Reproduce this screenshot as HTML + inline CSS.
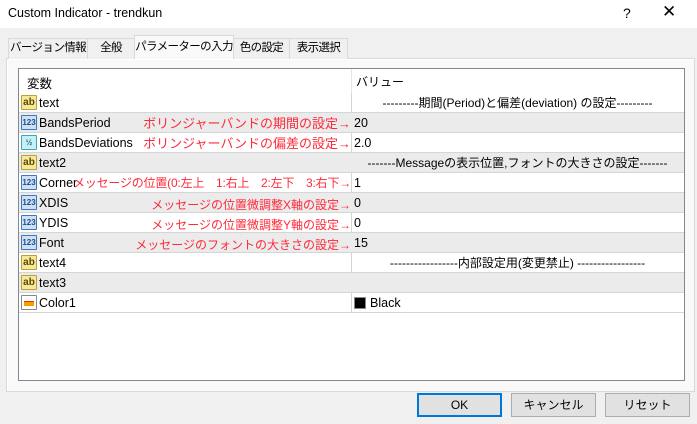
<!DOCTYPE html>
<html><head><meta charset="utf-8"><style>
*{margin:0;padding:0;box-sizing:border-box}
body{width:697px;height:424px;background:#f0f0f0;font-family:"Liberation Sans","Noto Sans CJK JP",sans-serif;font-size:12px;color:#000;position:relative;overflow:hidden}
.abs{position:absolute;white-space:nowrap}
.title{left:0;top:0;width:697px;height:28px;background:#fff}
.tab{position:absolute;top:38px;height:21px;border:1px solid #d9d9d9;border-bottom:none;background:#f0f0f0;font-size:11.5px;line-height:19px;text-align:center;white-space:nowrap;overflow:hidden;letter-spacing:-0.6px}
.panel{left:6px;top:58px;width:689px;height:334px;border:1px solid #d9d9d9;background:#f9f9f9;box-shadow:inset 1px 1px 0 #fff}
.list{left:18px;top:68px;width:667px;height:313px;border:1px solid #828790;background:#fff;overflow:hidden}
.row{position:absolute;left:0;width:665px;height:20px;border-bottom:1px solid #d5d5d5;font-size:12.5px;line-height:21px;white-space:nowrap}
.row.g{background:#ebebeb}
.row .n{position:absolute;left:20px;top:0}
.row .v{position:absolute;left:335px;top:0}
.row .c{position:absolute;left:332px;width:333px;text-align:center;top:0}
.vd{position:absolute;left:332px;top:0;width:1px;height:220px;background:#d5d5d5}
.ic{position:absolute;left:2px;top:2px;width:16px;height:15px;border:1px solid;border-radius:1px;font-size:8px;line-height:13px;text-align:center;font-weight:bold}
.ab{background:#f6e79a;border-color:#b9a23c;color:#5a4a00;font-size:10px}
.num{background:#cfe0f3;border-color:#3a79c2;color:#1b4f8f}
.fr{background:#c9eef3;border-color:#3aa8bf;color:#1b6f85}
.red{color:#ff2a3a;position:absolute;right:333px;top:0;font-size:13px}
.btn{position:absolute;top:393px;width:85px;height:24px;border:1px solid #adadad;background:#e1e1e1;text-align:center;line-height:22px;font-size:12px}
</style></head><body>
<div class="abs title"></div>
<div class="abs" style="left:8px;top:6px;font-size:12.5px">Custom Indicator - trendkun</div>
<div class="abs" style="left:623px;top:5px;font-size:14px">?</div>
<div class="abs" style="left:662px;top:2px;font-size:17px">✕</div>
<div class="abs panel"></div>
<div class="tab" style="left:8px;width:80px">バージョン情報</div>
<div class="tab" style="left:87px;width:48px">全般</div>
<div class="tab" style="left:134px;width:100px;top:35px;height:24px;background:#f9f9f9;line-height:22px;z-index:2">パラメーターの入力</div>
<div class="tab" style="left:233px;width:57px">色の設定</div>
<div class="tab" style="left:289px;width:59px">表示選択</div>
<div class="abs list">
 <div class="abs" style="left:8px;top:4px;font-size:12.5px">変数</div>
 <div class="abs" style="left:332px;top:0;width:1px;height:24px;background:#e5e5e5"></div>
 <div class="abs" style="left:337px;top:4px;font-size:12px">バリュー</div>
 <div style="position:absolute;top:24px;left:0;width:665px">
  <div class="vd"></div>
  <div class="row" style="top:0"><span class="ic ab">ab</span><span class="n">text</span><span class="c" style="font-size:12px">---------期間(Period)と偏差(deviation) の設定---------</span></div>
  <div class="row g" style="top:20px"><span class="ic num">123</span><span class="n">BandsPeriod</span><span class="red">ボリンジャーバンドの期間の設定→</span><span class="v">20</span></div>
  <div class="row" style="top:40px"><span class="ic fr">½</span><span class="n">BandsDeviations</span><span class="red">ボリンジャーバンドの偏差の設定→</span><span class="v">2.0</span></div>
  <div class="row g" style="top:60px"><span class="ic ab">ab</span><span class="n">text2</span><span class="c" style="font-size:12px">-------Messageの表示位置,フォントの大きさの設定-------</span></div>
  <div class="row" style="top:80px"><span class="ic num">123</span><span class="n">Corner</span><span class="red" style="font-size:12px;letter-spacing:-0.2px">メッセージの位置(0:左上　1:右上　2:左下　3:右下→</span><span class="v">1</span></div>
  <div class="row g" style="top:100px"><span class="ic num">123</span><span class="n">XDIS</span><span class="red" style="font-size:12px;top:2px">メッセージの位置微調整X軸の設定→</span><span class="v">0</span></div>
  <div class="row" style="top:120px"><span class="ic num">123</span><span class="n">YDIS</span><span class="red" style="font-size:12px;top:2px">メッセージの位置微調整Y軸の設定→</span><span class="v">0</span></div>
  <div class="row g" style="top:140px"><span class="ic num">123</span><span class="n">Font</span><span class="red" style="font-size:12px;top:2px">メッセージのフォントの大きさの設定→</span><span class="v">15</span></div>
  <div class="row" style="top:160px"><span class="ic ab">ab</span><span class="n">text4</span><span class="c" style="font-size:12px">-----------------内部設定用(変更禁止) -----------------</span></div>
  <div class="row g" style="top:180px"><span class="ic ab">ab</span><span class="n">text3</span></div>
  <div class="row" style="top:200px"><span class="ic" style="background:#fff;border-color:#888"><span style="position:absolute;left:2px;top:5px;width:10px;height:5px;background:#f5a000;border-top:1px solid #f03000"></span></span><span class="n">Color1</span><span class="v"><span style="display:inline-block;width:12px;height:12px;background:#000;border:1px solid #888;vertical-align:-2px;margin-right:4px"></span>Black</span></div>
 </div>
</div>
<div class="btn" style="left:417px;border:2px solid #0078d7;line-height:20px">OK</div>
<div class="btn" style="left:511px">キャンセル</div>
<div class="btn" style="left:605px">リセット</div>
</body></html>
